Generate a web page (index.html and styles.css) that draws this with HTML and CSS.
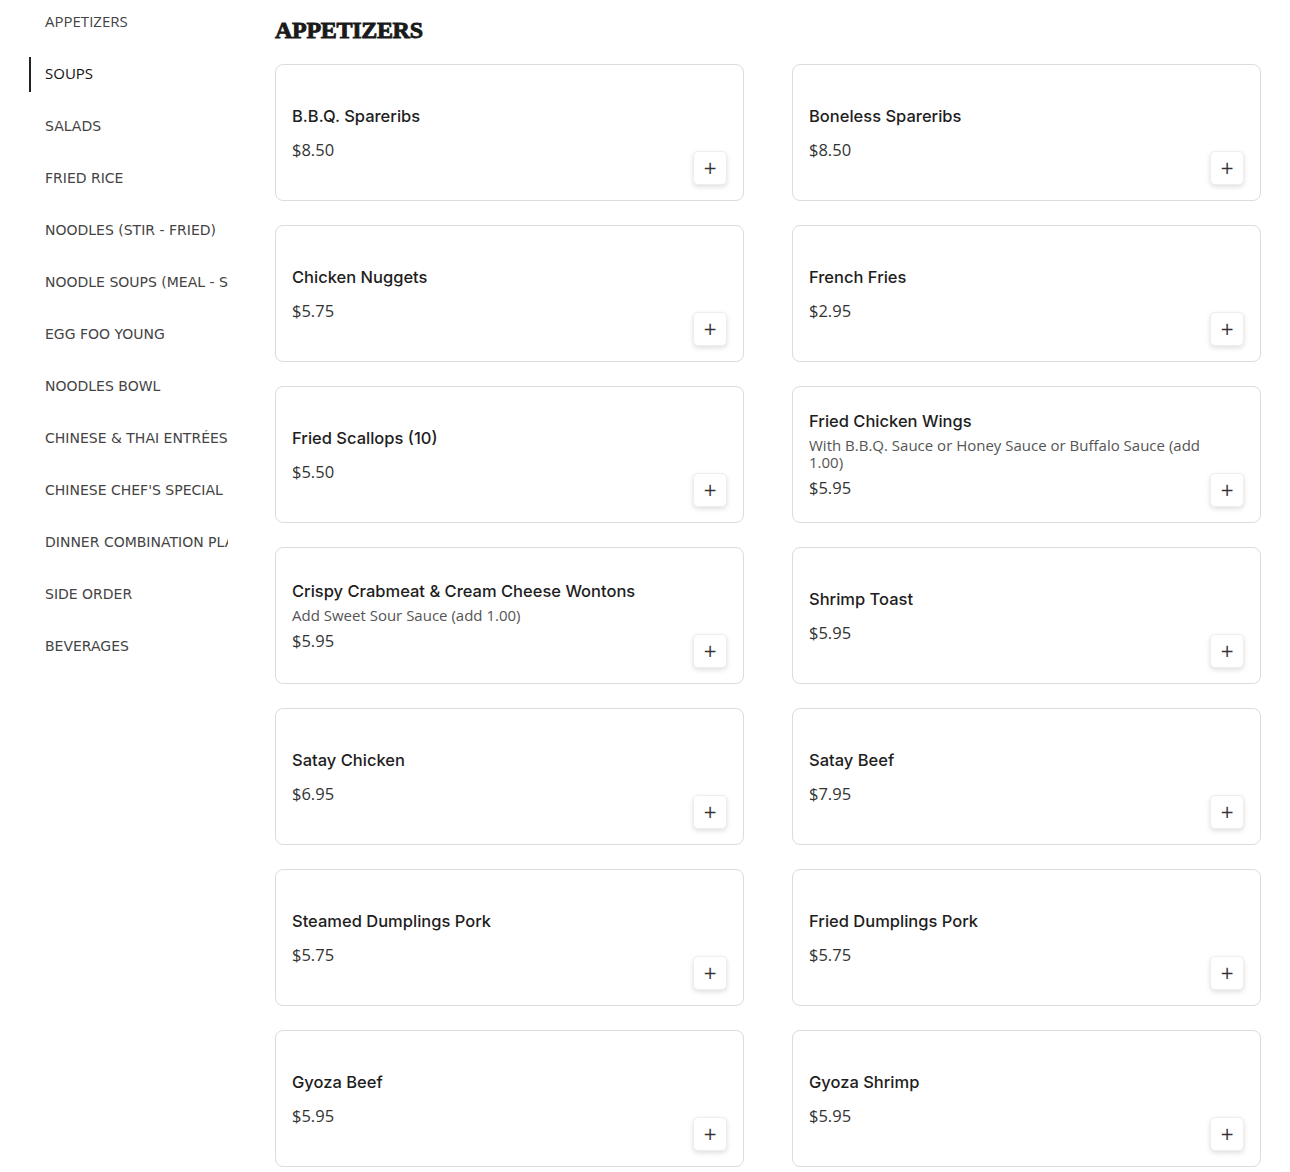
FILE: index.html
```html
<!DOCTYPE html>
<html lang="en">
<head>
<meta charset="utf-8">
<title>Menu</title>
<link rel="stylesheet" href="styles.css">
</head>
<body>
<div class="page">
  <nav class="sidebar">
    <a class="nav-item nav-alt">APPETIZERS</a>
    <a class="nav-item nav-alt active">SOUPS</a>
    <a class="nav-item">SALADS</a>
    <a class="nav-item">FRIED RICE</a>
    <a class="nav-item">NOODLES (STIR - FRIED)</a>
    <a class="nav-item">NOODLE SOUPS (MEAL - SIZE)</a>
    <a class="nav-item">EGG FOO YOUNG</a>
    <a class="nav-item">NOODLES BOWL</a>
    <a class="nav-item">CHINESE &amp; THAI ENTRÉES</a>
    <a class="nav-item">CHINESE CHEF'S SPECIAL</a>
    <a class="nav-item">DINNER COMBINATION PLATES</a>
    <a class="nav-item">SIDE ORDER</a>
    <a class="nav-item">BEVERAGES</a>
  </nav>
  <main class="content">
    <h2 class="section-title">APPETIZERS</h2>
    <div class="grid">
      <div class="card"><div class="info"><div class="name">B.B.Q. Spareribs</div><div class="price">$8.50</div></div><button class="add">+</button></div>
      <div class="card"><div class="info"><div class="name">Boneless Spareribs</div><div class="price">$8.50</div></div><button class="add">+</button></div>
      <div class="card"><div class="info"><div class="name">Chicken Nuggets</div><div class="price">$5.75</div></div><button class="add">+</button></div>
      <div class="card"><div class="info"><div class="name">French Fries</div><div class="price">$2.95</div></div><button class="add">+</button></div>
      <div class="card"><div class="info"><div class="name">Fried Scallops (10)</div><div class="price">$5.50</div></div><button class="add">+</button></div>
      <div class="card"><div class="info"><div class="name">Fried Chicken Wings</div><div class="desc">With B.B.Q. Sauce or Honey Sauce or Buffalo Sauce (add 1.00)</div><div class="price">$5.95</div></div><button class="add">+</button></div>
      <div class="card"><div class="info"><div class="name">Crispy Crabmeat &amp; Cream Cheese Wontons</div><div class="desc">Add Sweet Sour Sauce (add 1.00)</div><div class="price">$5.95</div></div><button class="add">+</button></div>
      <div class="card"><div class="info"><div class="name">Shrimp Toast</div><div class="price">$5.95</div></div><button class="add">+</button></div>
      <div class="card"><div class="info"><div class="name">Satay Chicken</div><div class="price">$6.95</div></div><button class="add">+</button></div>
      <div class="card"><div class="info"><div class="name">Satay Beef</div><div class="price">$7.95</div></div><button class="add">+</button></div>
      <div class="card"><div class="info"><div class="name">Steamed Dumplings Pork</div><div class="price">$5.75</div></div><button class="add">+</button></div>
      <div class="card"><div class="info"><div class="name">Fried Dumplings Pork</div><div class="price">$5.75</div></div><button class="add">+</button></div>
      <div class="card"><div class="info"><div class="name">Gyoza Beef</div><div class="price">$5.95</div></div><button class="add">+</button></div>
      <div class="card"><div class="info"><div class="name">Gyoza Shrimp</div><div class="price">$5.95</div></div><button class="add">+</button></div>
    </div>
  </main>
</div>
</body>
</html>
```
FILE: styles.css
```css
* { box-sizing: border-box; }
html, body { margin: 0; padding: 0; background: #fff; }
body { font-family: "Open Sans", "DejaVu Sans", sans-serif; color: #222; }

.page {
  display: flex;
  align-items: flex-start;
  padding-left: 29px;
}

.sidebar {
  width: 199px;
  flex: none;
  display: flex;
  flex-direction: column;
  gap: 17px;
  padding-top: 5px;
}

.nav-item {
  display: block;
  height: 35px;
  line-height: 35px;
  padding-left: 14px;
  font-family: "DejaVu Sans", sans-serif;
  font-size: 14px;
  color: #444;
  white-space: nowrap;
  overflow: hidden;
  border-left: 2px solid transparent;
}
.nav-alt {
  font-family: "Open Sans", "DejaVu Sans", sans-serif;
  font-size: 15px;
  line-height: 33px;
}
.nav-item.active { border-left-color: #222; color: #111; }

.content {
  margin-left: 47px;
  width: 986px;
}

.section-title {
  margin: 14px 0 0;
  height: 36px;
  font-family: "Liberation Serif", serif;
  font-weight: 900;
  font-size: 24px;
  line-height: 32px;
  letter-spacing: -0.3px;
  -webkit-text-stroke: 0.9px #1a1a1a;
  color: #1a1a1a;
}

.grid {
  margin-top: 14px;
  display: grid;
  grid-template-columns: 469px 469px;
  column-gap: 48px;
  row-gap: 24px;
}

.card {
  height: 137px;
  border: 1px solid #dcdcdc;
  border-radius: 8px;
  padding: 16px;
  display: flex;
  gap: 6px;
  align-items: center;
}

.info {
  flex: 1;
  min-width: 0;
  display: flex;
  flex-direction: column;
}

.name {
  font-family: "Inter", "Open Sans", sans-serif;
  font-size: 16.5px;
  font-weight: 500;
  line-height: 22px;
  color: #1e1e1e;
}

.desc {
  margin-top: 5px;
  font-size: 15px;
  line-height: 17px;
  color: #555;
}

.price {
  margin-top: 12px;
  font-size: 16.5px;
  line-height: 22px;
  color: #333;
}
.desc + .price { margin-top: 6px; }

.add {
  align-self: flex-end;
  flex: none;
  width: 34px;
  height: 34px;
  margin-bottom: -1px;
  border: 1px solid #eee;
  border-radius: 5px;
  background: #fff;
  box-shadow: 0 2px 5px rgba(0,0,0,0.13);
  font-family: "DejaVu Sans", sans-serif;
  font-size: 17px;
  line-height: 30px;
  color: #333;
  padding: 0;
}
```
